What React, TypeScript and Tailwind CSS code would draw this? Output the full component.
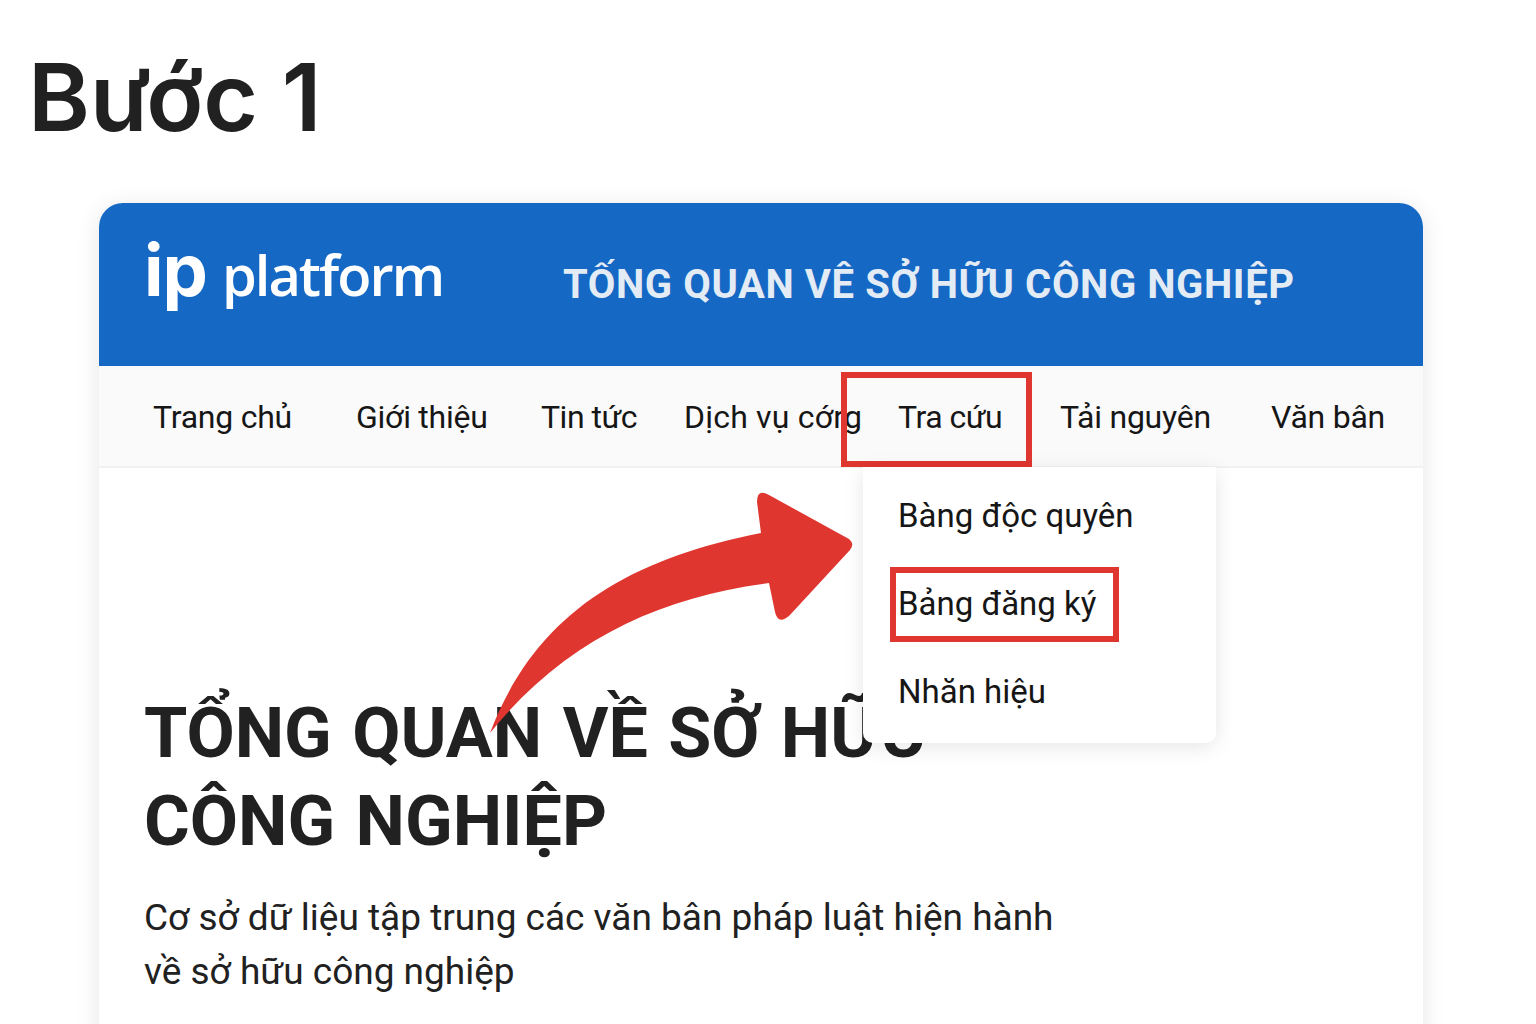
const navItems = [
  { label: "Trang chủ", width: "w-[203px]", extra: "" },
  { label: "Giới thiệu", width: "w-[185px]", extra: "" },
  { label: "Tin tức", width: "w-[143px]", extra: "tracking-[-0.5px]" },
  { label: "Dịch vụ cớrg", width: "w-[214px]", extra: "tracking-[0.2px]" },
  { label: "Tra cứu", width: "w-[162px]", extra: "tracking-[-0.5px]" },
  { label: "Tải nguyên", width: "w-[211px]", extra: "" },
  { label: "Văn bân", width: "w-[120px]", extra: "" },
];

const menuItems = ["Bàng độc quyên", "Bảng đăng ký", "Nhăn hiệu"];

function Arrow() {
  return (
    <svg
      className="absolute left-0 top-0 pointer-events-none"
      width="1536"
      height="1024"
      viewBox="0 0 1536 1024"
    >
      <path
        fill="#e03630"
        d="M490 733 C 535 615, 625 560, 761 533 L 757 502 Q 757 488 769 495 L 849 539 Q 855 544 850 550 L 789 616 Q 778 625 775 612 L 769 583 C 660 597, 565 640, 490 733 Z"
      />
    </svg>
  );
}

export default function App() {
  return (
    <div className="relative h-[1024px] overflow-hidden bg-white font-['Roboto',sans-serif] text-[#1f1f1f]">
      <h1 className="pl-[28px] pt-[38px] font-['Inter',sans-serif] text-[94px] leading-[118px] font-semibold text-[#212121]">Bước 1</h1>

      <div className="relative mt-[47px] ml-[99px] w-[1324px] rounded-t-[24px] bg-white shadow-[0_4px_24px_rgba(0,0,0,0.10)] h-[900px]">
        <header className="flex h-[163px] rounded-t-[24px] bg-[#1568c4] pl-[45px]">
          <div className="flex w-[419px] items-baseline pt-[23px] text-white">
            <span className="font-['Inter',sans-serif] text-[72px] leading-[88px] font-bold tracking-[-1px]">ip</span>
            <span className="ml-[15px] text-[56px] leading-[88px] font-semibold font-['Open_Sans',sans-serif] tracking-[-2px]">platform</span>
          </div>
          <div className="pt-[57px] text-[40px] leading-[50px] font-bold tracking-[0.6px] text-[#e3ebf5] whitespace-nowrap">
            TỐNG QUAN VÊ SỞ HỮU CÔNG NGHIỆP
          </div>
        </header>

        <nav className="flex h-[102px] items-center border-b-2 border-[#f1f1f1] bg-[#fafafa] pl-[54px] pt-[2px] text-[32px] tracking-[-0.25px] text-[#161616]">
          {navItems.map((item) => (
            <span key={item.label} className={`${item.width} ${item.extra} shrink-0 whitespace-nowrap`}>
              {item.label}
            </span>
          ))}
        </nav>

        <main className="pl-[45px] pt-[221px]">
          <h2 className="w-[900px] text-[70px] leading-[88px] font-bold [word-spacing:3px] text-[#212121]">
            TỔNG QUAN VỀ SỞ HỮU CÔNG NGHIỆP
          </h2>
          <p className="mt-[26px] w-[930px] text-[37px] leading-[54px] text-[#212121]">
            Cơ sở dữ liệu tập trung các văn bân pháp luật hiện hành về sở hữu công nghiệp
          </p>
        </main>

        {/* highlight on Tra cứu */}
        <div className="absolute left-[742px] top-[169px] h-[95px] w-[191px] border-[6px] border-[#e03630]" />

        <div className="absolute left-[764px] top-[264px] w-[353px] h-[276px] rounded-b-[10px] bg-white pl-[35px] pt-[5px] text-[33px] text-[#161616] shadow-[0_4px_20px_rgba(0,0,0,0.10)]">
          {menuItems.map((item) => (
            <div key={item} className="flex h-[88px] items-center whitespace-nowrap">
              {item}
            </div>
          ))}
          <div className="absolute left-[27px] top-[100px] h-[75px] w-[229px] border-[6px] border-[#e03630]" />
        </div>
      </div>

      <Arrow />
    </div>
  );
}
